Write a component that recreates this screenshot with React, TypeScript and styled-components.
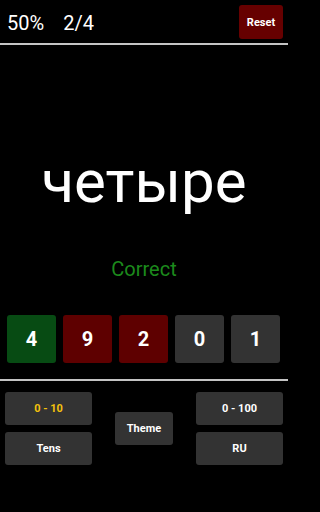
import React from 'react';
import styled, { createGlobalStyle } from 'styled-components';

const GlobalStyle = createGlobalStyle`
  html, body {
    margin: 0;
    padding: 0;
    background: #000;
  }
  body {
    font-family: Roboto, "Noto Sans", sans-serif;
    color: #fff;
  }
`;

const Screen = styled.div`
  width: 288px;
  height: 512px;
  background: #000;
  display: flex;
  flex-direction: column;
  overflow: hidden;
`;

const TopBar = styled.div`
  height: 43px;
  display: flex;
  align-items: flex-start;
  justify-content: space-between;
  padding: 0 5px 0 7px;
  box-sizing: border-box;
`;

const Stats = styled.div`
  display: flex;
  gap: 19px;
  margin-top: 13px;
  font-size: 20px;
  line-height: 20px;
  color: #fff;
`;

const ResetButton = styled.button`
  width: 44px;
  height: 34px;
  margin-top: 5px;
  border: none;
  border-radius: 3px;
  background: #660000;
  color: #fff;
  font-family: Roboto, sans-serif;
  font-weight: 700;
  font-size: 11px;
  padding: 0;
`;

const Divider = styled.div<{ $gap?: number }>`
  height: 2px;
  margin-top: ${({ $gap }) => $gap ?? 0}px;
  background: #c4c4c4;
  flex-shrink: 0;
`;

const Word = styled.div`
  margin-top: 107px;
  font-size: 60px;
  line-height: 60px;
  text-align: center;
  color: #fff;
`;

const Feedback = styled.div`
  margin-top: 47px;
  font-size: 20px;
  line-height: 20px;
  text-align: center;
  color: #1c8a1c;
`;

const Tiles = styled.div`
  margin-top: 36px;
  display: flex;
  gap: 7px;
  padding: 0 7px;
`;

const Tile = styled.div<{ $state: 'right' | 'wrong' | 'idle' }>`
  width: 49px;
  height: 48px;
  border-radius: 3px;
  display: flex;
  align-items: center;
  justify-content: center;
  font-size: 20px;
  font-weight: 700;
  color: #fff;
  background: ${({ $state }) =>
    $state === 'right' ? '#074b13' : $state === 'wrong' ? '#5e0000' : '#333333'};
`;

const Controls = styled.div`
  display: grid;
  grid-template-columns: 87px 58px 87px;
  justify-content: space-between;
  align-items: center;
  padding: 11px 5px 0 5px;
`;

const Column = styled.div`
  display: flex;
  flex-direction: column;
  gap: 7px;
`;

const ControlButton = styled.button<{ $active?: boolean }>`
  height: 33px;
  border: none;
  border-radius: 3px;
  background: #333333;
  color: ${({ $active }) => ($active ? '#f4c20d' : '#fff')};
  font-family: Roboto, sans-serif;
  font-weight: 700;
  font-size: 11px;
  padding: 0;
`;

const tiles: { digit: string; state: 'right' | 'wrong' | 'idle' }[] = [
  { digit: '4', state: 'right' },
  { digit: '9', state: 'wrong' },
  { digit: '2', state: 'wrong' },
  { digit: '0', state: 'idle' },
  { digit: '1', state: 'idle' },
];

const App: React.FC = () => {
  return (
    <Screen>
      <GlobalStyle />
      <TopBar>
        <Stats>
          <span>50%</span>
          <span>2/4</span>
        </Stats>
        <ResetButton>Reset</ResetButton>
      </TopBar>
      <Divider />
      <Word>четыре</Word>
      <Feedback>Correct</Feedback>
      <Tiles>
        {tiles.map((t, i) => (
          <Tile key={i} $state={t.state}>
            {t.digit}
          </Tile>
        ))}
      </Tiles>
      <Divider $gap={16} />
      <Controls>
        <Column>
          <ControlButton $active>0 - 10</ControlButton>
          <ControlButton>Tens</ControlButton>
        </Column>
        <ControlButton>Theme</ControlButton>
        <Column>
          <ControlButton>0 - 100</ControlButton>
          <ControlButton>RU</ControlButton>
        </Column>
      </Controls>
    </Screen>
  );
};

export default App;
